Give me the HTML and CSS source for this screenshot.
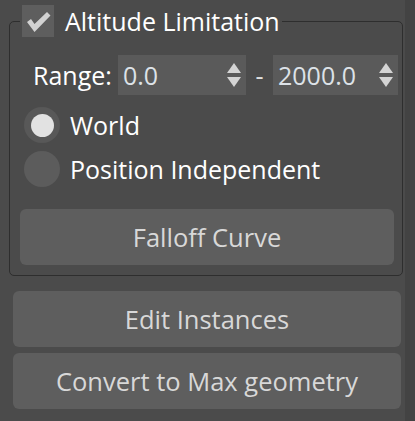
FILE: index.html
```html
<!DOCTYPE html>
<html>
<head>
<meta charset="utf-8">
<link rel="stylesheet" href="styles.css">
</head>
<body>
<div class="screen">
  <div class="panel">
    <fieldset class="group">
      <legend class="legend">
        <span class="checkbox">
          <svg width="32" height="32" viewBox="0 0 32 32"><path d="M5 17 L9 14 L12.5 19 L25 7 L28.5 10.5 L12.5 27 Z" fill="#d2d2d2"/></svg>
        </span>
        <span class="title">Altitude Limitation</span>
      </legend>
      <div class="range-row">
        <span class="label">Range:</span>
        <div class="spinner spin-a">
          <span class="value">0.0</span>
          <span class="arrows"><span class="up"></span><span class="down"></span></span>
        </div>
        <span class="dash">-</span>
        <div class="spinner spin-b">
          <span class="value">2000.0</span>
          <span class="arrows"><span class="up"></span><span class="down"></span></span>
        </div>
      </div>
      <div class="radio-row">
        <span class="radio checked"><span class="dot"></span></span>
        <span class="label">World</span>
      </div>
      <div class="radio-row second">
        <span class="radio"></span>
        <span class="label">Position Independent</span>
      </div>
      <div class="btn falloff">Falloff Curve</div>
    </fieldset>
    <div class="btn wide first">Edit Instances</div>
    <div class="btn wide">Convert to Max geometry</div>
  </div>
  <div class="strip"></div>
</div>
</body>
</html>
```
FILE: styles.css
```css
html, body {
  margin: 0;
  padding: 0;
  background: #4b4b4b;
}
body {
  font-family: "Open Sans", "Noto Sans", sans-serif;
  width: 415px;
  height: 421px;
  overflow: hidden;
}
.screen {
  display: flex;
  width: 415px;
  height: 421px;
}
.panel {
  width: 405px;
  padding-left: 9px;
  box-sizing: border-box;
}
.strip {
  width: 10px;
  background: #434343;
}
.group {
  margin: 5px 0 0 0;
  width: 394px;
  box-sizing: border-box;
  border: 1px solid #2e2e2e;
  border-radius: 5px;
  padding: 0 0 10px 0;
  min-width: 0;
}
.legend {
  margin-left: 10px;
  padding: 0 2px;
  display: flex;
  align-items: center;
  height: 32px;
}
.checkbox {
  width: 32px;
  height: 32px;
  background: #5e5e5e;
  display: block;
}
.checkbox svg { display: block; }
.title {
  color: #ffffff;
  font-size: 25px;
  margin-left: 11px;
  line-height: 32px;
}
.range-row {
  display: flex;
  align-items: center;
  margin-top: 18px;
  padding-left: 23px;
  height: 40px;
}
.label {
  color: #ffffff;
  font-size: 25px;
}
.range-row .label { width: 85px; }
.spinner {
  height: 40px;
  background: #5a5a5a;
  display: flex;
  align-items: center;
  justify-content: space-between;
  box-sizing: border-box;
  padding: 0 5px 0 5px;
}
.spin-a { width: 128px; }
.spin-b { width: 125px; }
.value {
  color: #dde2e8;
  font-size: 25px;
}
.dash {
  color: #e0e0e0;
  font-size: 25px;
  width: 27px;
  text-align: center;
}
.arrows {
  display: flex;
  flex-direction: column;
  gap: 4px;
}
.up, .down {
  width: 0;
  height: 0;
  border-left: 7px solid transparent;
  border-right: 7px solid transparent;
}
.up { border-bottom: 10px solid #d4d4d4; }
.down { border-top: 10px solid #d4d4d4; }
.radio-row {
  display: flex;
  align-items: center;
  margin-top: 12px;
  padding-left: 14px;
  height: 36px;
}
.radio-row.second { margin-top: 8px; }
.radio {
  width: 36px;
  height: 36px;
  border-radius: 50%;
  background: #5c5c5c;
  display: flex;
  align-items: center;
  justify-content: center;
  margin-right: 10px;
}
.radio.checked { background: #585858; }
.dot {
  width: 23px;
  height: 23px;
  border-radius: 50%;
  background: #e2e2e2;
}
.btn {
  height: 56px;
  background: #5e5e5e;
  border-radius: 6px;
  color: #d8d8d8;
  font-size: 25.5px;
  display: flex;
  align-items: center;
  justify-content: center;
}
.falloff {
  margin: 22px 8px 0 10px;
}
.wide {
  margin: 6px 0 0 4px;
  width: 388px;
}
.wide.first { margin-top: 15px; }
```
